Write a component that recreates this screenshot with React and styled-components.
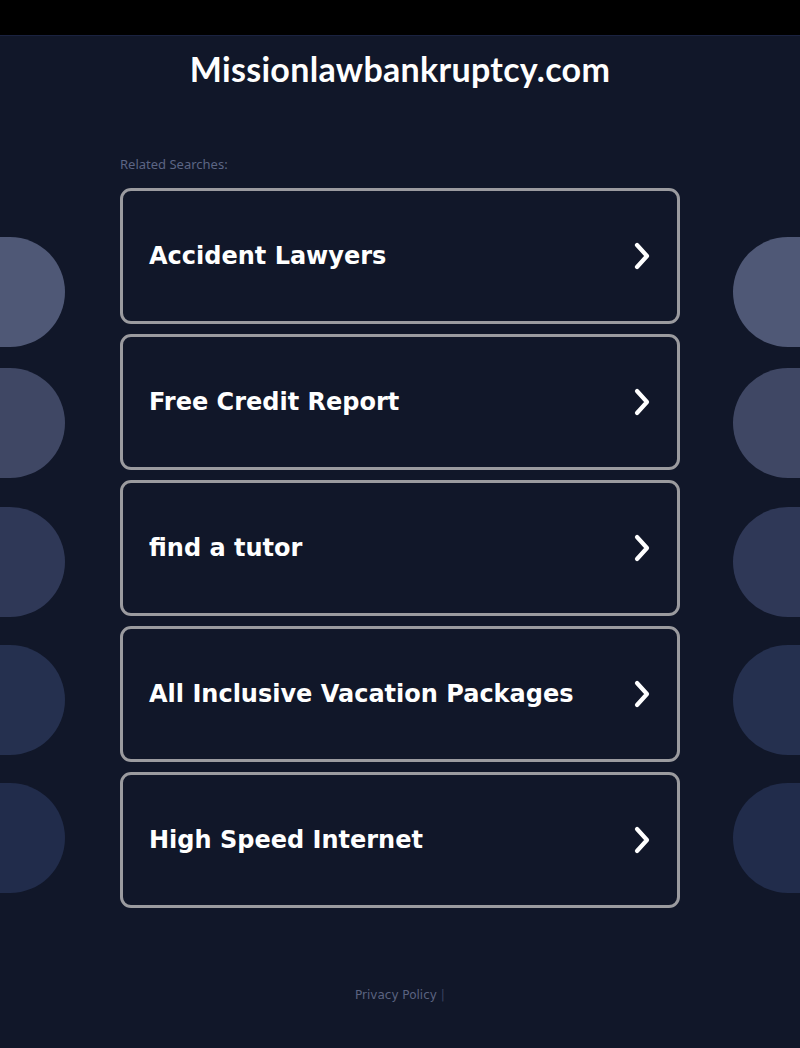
import React from 'react';
import styled, { createGlobalStyle } from 'styled-components';

const GlobalStyle = createGlobalStyle`
  html, body {
    margin: 0;
    padding: 0;
    background: #111729;
  }
`;

const Page = styled.div`
  position: relative;
  min-height: 1048px;
  background: #111729;
  overflow: hidden;
`;

const TopBar = styled.div`
  height: 35px;
  background: #000;
  border-bottom: 1px solid #1a2240;
`;

const Decor = styled.div`
  position: absolute;
  top: 237px;
  ${p => (p.side === 'left' ? 'left: -55px;' : 'right: -53px;')}
  display: flex;
  flex-direction: column;
  pointer-events: none;
`;

const Blob = styled.div`
  width: 120px;
  height: 110px;
  margin-top: ${p => p.offset}px;
  border-radius: 55px;
  background: ${p => p.color};
`;

const Main = styled.main`
  position: relative;
  width: 560px;
  margin: 0 auto;
`;

const Title = styled.h1`
  margin: 0;
  padding-top: 13px;
  height: 58px;
  text-align: center;
  font-family: Lato, 'Noto Sans', sans-serif;
  font-weight: 700;
  font-size: 34px;
  line-height: 40px;
  color: #fff;
  letter-spacing: 0.3px;
`;

const Related = styled.div`
  margin-top: 49px;
  font-family: 'Noto Sans', sans-serif;
  font-size: 13px;
  color: #5c6584;
  line-height: 16px;
`;

const List = styled.div`
  margin-top: 16px;
  display: flex;
  flex-direction: column;
  gap: 10px;
`;

const Card = styled.a`
  box-sizing: border-box;
  height: 136px;
  display: flex;
  align-items: center;
  justify-content: space-between;
  padding: 0 24px 0 26px;
  border: 3px solid #9b9b9f;
  border-radius: 11px;
  background: transparent;
  text-decoration: none;
  color: #fff;
  font-family: 'DejaVu Sans', sans-serif;
  font-weight: 700;
  font-size: 24px;
`;

const Footer = styled.footer`
  margin-top: 80px;
  text-align: center;
  font-family: 'DejaVu Sans', sans-serif;
  font-size: 12px;
  color: #5b6380;
`;

const Sep = styled.span`
  color: #3a4260;
  margin-left: 4px;
`;

const Chevron = () => (
  <svg width="22" height="30" viewBox="0 0 22 30">
    <path
      d="M6 4 L16 15 L6 26"
      fill="none"
      stroke="#fff"
      strokeWidth="4.2"
      strokeLinecap="round"
      strokeLinejoin="round"
    />
  </svg>
);

const searches = [
  'Accident Lawyers',
  'Free Credit Report',
  'find a tutor',
  'All Inclusive Vacation Packages',
  'High Speed Internet'
];

const blobs = [
  { color: '#4f5876', offset: 0 },
  { color: '#3f4764', offset: 21 },
  { color: '#2f3857', offset: 29 },
  { color: '#25304f', offset: 28 },
  { color: '#212c4b', offset: 28 }
];

const App = () => (
  <>
    <GlobalStyle />
    <Page>
      <TopBar />
      <Decor side="left">
        {blobs.map(b => (
          <Blob key={b.color} color={b.color} offset={b.offset} />
        ))}
      </Decor>
      <Decor side="right">
        {blobs.map(b => (
          <Blob key={b.color} color={b.color} offset={b.offset} />
        ))}
      </Decor>
      <Main>
        <Title>Missionlawbankruptcy.com</Title>
        <Related>Related Searches:</Related>
        <List>
          {searches.map(s => (
            <Card key={s} href="#">
              <span>{s}</span>
              <Chevron />
            </Card>
          ))}
        </List>
        <Footer>
          Privacy Policy<Sep>|</Sep>
        </Footer>
      </Main>
    </Page>
  </>
);

export default App;
